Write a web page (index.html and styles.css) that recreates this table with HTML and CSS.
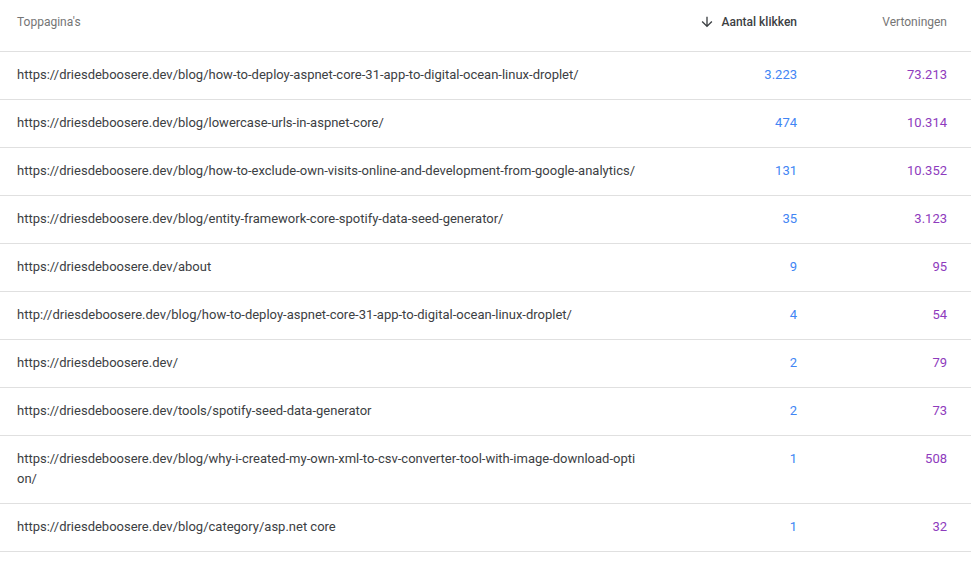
FILE: index.html
```html
<!DOCTYPE html>
<html lang="nl">
<head>
<meta charset="utf-8">
<title>Toppagina's</title>
<link rel="stylesheet" href="styles.css">
</head>
<body>
<div class="table">
  <div class="row head">
    <div class="cell page">Toppagina's</div>
    <div class="cell num sorted"><svg class="arrow" viewBox="0 0 24 24" width="16" height="16"><path d="M20 12l-1.41-1.41L13 16.17V4h-2v12.17l-5.58-5.59L4 12l8 8 8-8z" fill="#3c4043"/></svg>Aantal klikken</div>
    <div class="cell num">Vertoningen</div>
  </div>
  <div class="row"><div class="cell page">https://driesdeboosere.dev/blog/how-to-deploy-aspnet-core-31-app-to-digital-ocean-linux-droplet/</div><div class="cell num clicks">3.223</div><div class="cell num impr">73.213</div></div>
  <div class="row"><div class="cell page">https://driesdeboosere.dev/blog/lowercase-urls-in-aspnet-core/</div><div class="cell num clicks">474</div><div class="cell num impr">10.314</div></div>
  <div class="row"><div class="cell page">https://driesdeboosere.dev/blog/how-to-exclude-own-visits-online-and-development-from-google-analytics/</div><div class="cell num clicks">131</div><div class="cell num impr">10.352</div></div>
  <div class="row"><div class="cell page">https://driesdeboosere.dev/blog/entity-framework-core-spotify-data-seed-generator/</div><div class="cell num clicks">35</div><div class="cell num impr">3.123</div></div>
  <div class="row"><div class="cell page">https://driesdeboosere.dev/about</div><div class="cell num clicks">9</div><div class="cell num impr">95</div></div>
  <div class="row"><div class="cell page">http://driesdeboosere.dev/blog/how-to-deploy-aspnet-core-31-app-to-digital-ocean-linux-droplet/</div><div class="cell num clicks">4</div><div class="cell num impr">54</div></div>
  <div class="row"><div class="cell page">https://driesdeboosere.dev/</div><div class="cell num clicks">2</div><div class="cell num impr">79</div></div>
  <div class="row"><div class="cell page">https://driesdeboosere.dev/tools/spotify-seed-data-generator</div><div class="cell num clicks">2</div><div class="cell num impr">73</div></div>
  <div class="row"><div class="cell page">https://driesdeboosere.dev/blog/why-i-created-my-own-xml-to-csv-converter-tool-with-image-download-option/</div><div class="cell num clicks">1</div><div class="cell num impr">508</div></div>
  <div class="row"><div class="cell page">https://driesdeboosere.dev/blog/category/asp.net core</div><div class="cell num clicks">1</div><div class="cell num impr">32</div></div>
</div>
</body>
</html>
```
FILE: styles.css
```css
html, body {
  margin: 0;
  padding: 0;
  background: #fff;
}
body {
  font-family: Roboto, "Liberation Sans", Arial, sans-serif;
  font-size: 13px;
  color: #3c4043;
}
.table {
  display: flex;
  flex-direction: column;
  width: 971px;
}
.row {
  display: grid;
  grid-template-columns: 660px 161px 150px;
  border-bottom: 1px solid #e0e0e0;
  line-height: 20px;
}
.cell {
  display: flex;
  align-items: flex-start;
  padding-top: 13px;
  padding-bottom: 14px;
}
.row.head {
  font-size: 12px;
  color: #757575;
}
.row.head .cell {
  padding-top: 12px;
  padding-bottom: 19px;
  align-items: center;
}
.page {
  padding-left: 17px;
  padding-right: 20px;
  word-break: break-all;
}
.num {
  justify-content: flex-end;
  padding-right: 24px;
}
.sorted {
  color: #3c4043;
  font-weight: 500;
}
.arrow {
  margin-right: 7px;
}
.clicks {
  color: #4285f4;
}
.impr {
  color: #8e3bbd;
}
```
